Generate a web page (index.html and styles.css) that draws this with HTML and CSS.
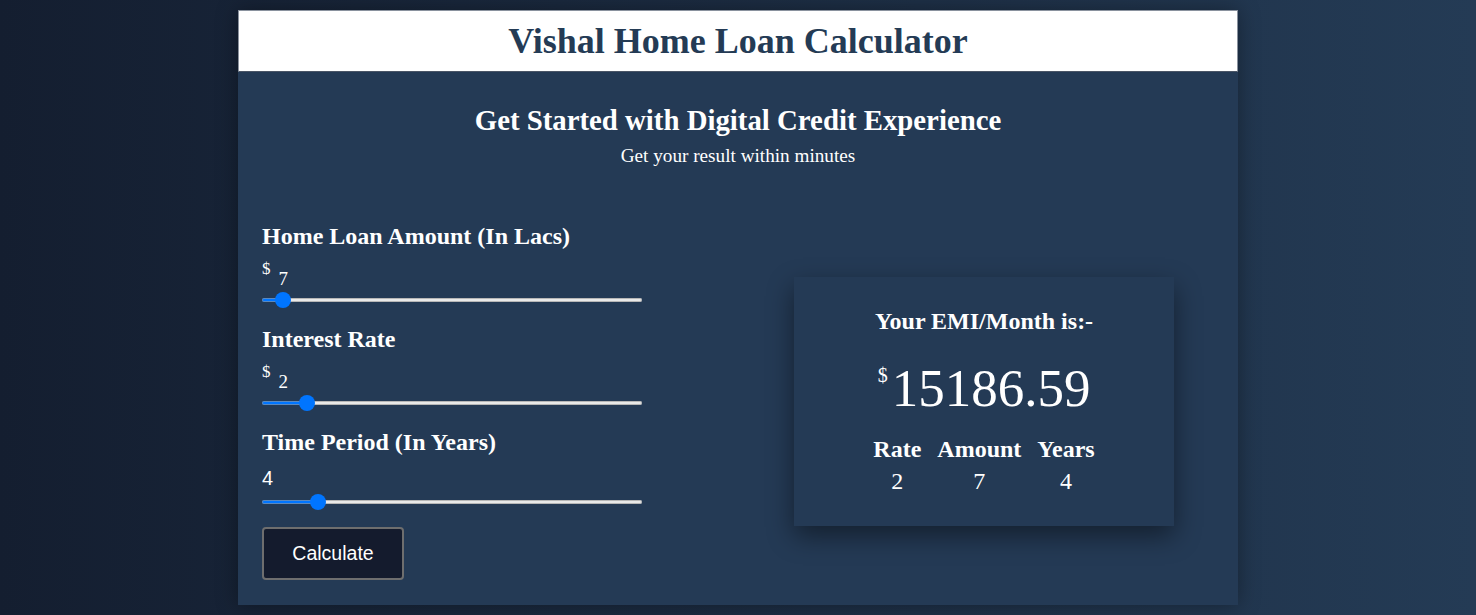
FILE: index.html
```html
<!DOCTYPE html>
<html>
<head>
<meta charset="utf-8">
<link rel="stylesheet" href="styles.css">
</head>
<body>
<div class="app">
  <header class="topbar"><h1>Vishal Home Loan Calculator</h1></header>
  <main class="panel">
    <div class="intro">
      <h2>Get Started with Digital Credit Experience</h2>
      <p>Get your result within minutes</p>
    </div>
    <div class="row">
      <div class="inputs">
        <div class="field">
          <h3>Home Loan Amount (In Lacs)</h3>
          <div class="value"><sup>$</sup><span class="num">7</span></div>
          <input class="slider" type="range" min="0" max="1000" value="36" style="--fill:5.6%">
        </div>
        <div class="field">
          <h3>Interest Rate</h3>
          <div class="value"><sup>$</sup><span class="num">2</span></div>
          <input class="slider" type="range" min="0" max="1000" value="102" style="--fill:11.9%">
        </div>
        <div class="field">
          <h3>Time Period (In Years)</h3>
          <div class="value sans">4</div>
          <input class="slider" type="range" min="0" max="1000" value="132" style="--fill:14.7%">
        </div>
        <button class="calc">Calculate</button>
      </div>
      <div class="result">
        <h3>Your EMI/Month is:-</h3>
        <div class="emi"><sup>$</sup>15186.59</div>
        <table class="stats">
          <tr><th>Rate</th><th>Amount</th><th>Years</th></tr>
          <tr><td>2</td><td>7</td><td>4</td></tr>
        </table>
      </div>
    </div>
  </main>
</div>
</body>
</html>
```
FILE: styles.css
```css
html, body {
  margin: 0;
  height: 100%;
}
body {
  background: linear-gradient(to right, #141e30, #243b55);
  font-family: "Liberation Serif", "Times New Roman", serif;
  color: #fff;
}
.app {
  width: 1000px;
  margin: 10px auto 0;
  box-shadow: 0 0 20px rgba(0,0,0,0.35);
}
.topbar {
  background: #fff;
  border: 1px solid #8a929e;
  border-bottom-color: #4a5566;
  height: 60px;
  display: flex;
  align-items: center;
  justify-content: center;
}
.topbar h1 {
  margin: 0;
  font-size: 36px;
  font-weight: bold;
  color: #243b55;
}
.panel {
  background: #243a55;
  padding: 31px 24px 25px;
}
.intro {
  text-align: center;
}
.intro h2 {
  margin: 0;
  font-size: 28.8px;
  line-height: 34px;
}
.intro p {
  margin: 8px 0 0;
  font-size: 19.2px;
  line-height: 22px;
}
.row {
  display: flex;
  align-items: center;
  margin-top: 55px;
}
.inputs {
  width: 380px;
  display: flex;
  flex-direction: column;
}
.field {
  margin-bottom: 17px;
}
.field h3 {
  margin: 0;
  font-size: 24px;
  line-height: 28px;
}
.value {
  height: 36px;
  font-size: 19px;
  line-height: 36px;
}
.value sup {
  font-size: 17px;
  line-height: 0;
  vertical-align: 0;
  margin-right: 8px;
}
.value .num {
  vertical-align: -11px;
}
.value.sans {
  height: 32px;
  line-height: 44px;
  font-family: "Liberation Sans", Arial, sans-serif;
  font-size: 20px;
}
.slider {
  -webkit-appearance: none;
  appearance: none;
  display: block;
  width: 380px;
  height: 16px;
  margin: 6px 0 0;
  padding: 0;
  background: transparent;
}
.slider::-webkit-slider-runnable-track {
  height: 4px;
  border-radius: 2px;
  background: linear-gradient(to right, #0075ff 0, #0075ff var(--fill), #e9e9e9 var(--fill), #e9e9e9 100%);
  box-shadow: inset 0 0 0 1px rgba(150,150,150,0.6);
}
.slider::-webkit-slider-thumb {
  -webkit-appearance: none;
  appearance: none;
  width: 16px;
  height: 16px;
  margin-top: -6px;
  border-radius: 50%;
  background: #0075ff;
  border: none;
}
.calc {
  align-self: flex-start;
  width: 142px;
  height: 53px;
  background: #141b2d;
  color: #fff;
  border: 2px solid #6e6e6e;
  border-radius: 4px;
  font-family: "Liberation Sans", Arial, sans-serif;
  font-size: 19.5px;
}
.result {
  width: 380px;
  height: 249px;
  margin-left: 152px;
  background: #243a55;
  box-shadow: 0 10px 25px rgba(0,0,0,0.45);
  display: flex;
  flex-direction: column;
  align-items: center;
  padding-top: 30px;
  box-sizing: border-box;
}
.result h3 {
  margin: 0;
  font-size: 24px;
  line-height: 28px;
}
.emi {
  font-size: 53px;
  margin-top: 10px;
  line-height: 60px;
}
.emi sup {
  font-size: 20px;
  vertical-align: 24px;
  margin-right: 4px;
}
.stats {
  margin-top: 17px;
  border-spacing: 0;
  font-size: 24px;
}
.stats th {
  padding: 0 8px;
  line-height: 28px;
}
.stats td {
  text-align: center;
  padding: 4px 0 0;
  line-height: 28px;
}
```
